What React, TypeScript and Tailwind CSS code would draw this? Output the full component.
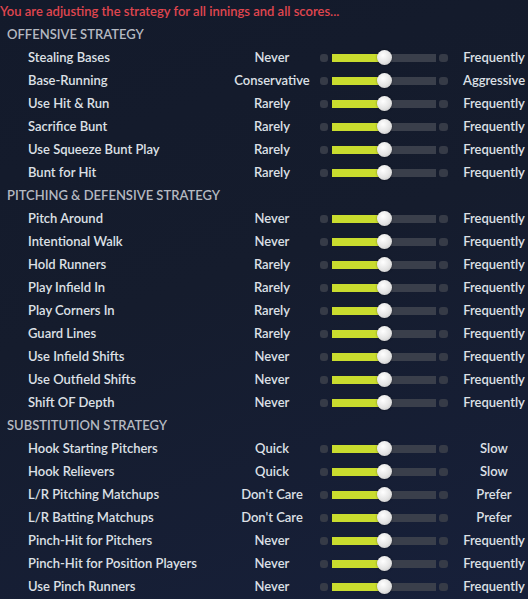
import React from "react"

type Row = { label: string; low: string; high: string }
type Section = { title: string; rows: Row[] }

const sections: Section[] = [
  {
    title: "OFFENSIVE STRATEGY",
    rows: [
      { label: "Stealing Bases", low: "Never", high: "Frequently" },
      { label: "Base-Running", low: "Conservative", high: "Aggressive" },
      { label: "Use Hit & Run", low: "Rarely", high: "Frequently" },
      { label: "Sacrifice Bunt", low: "Rarely", high: "Frequently" },
      { label: "Use Squeeze Bunt Play", low: "Rarely", high: "Frequently" },
      { label: "Bunt for Hit", low: "Rarely", high: "Frequently" },
    ],
  },
  {
    title: "PITCHING & DEFENSIVE STRATEGY",
    rows: [
      { label: "Pitch Around", low: "Never", high: "Frequently" },
      { label: "Intentional Walk", low: "Never", high: "Frequently" },
      { label: "Hold Runners", low: "Rarely", high: "Frequently" },
      { label: "Play Infield In", low: "Rarely", high: "Frequently" },
      { label: "Play Corners In", low: "Rarely", high: "Frequently" },
      { label: "Guard Lines", low: "Rarely", high: "Frequently" },
      { label: "Use Infield Shifts", low: "Never", high: "Frequently" },
      { label: "Use Outfield Shifts", low: "Never", high: "Frequently" },
      { label: "Shift OF Depth", low: "Never", high: "Frequently" },
    ],
  },
  {
    title: "SUBSTITUTION STRATEGY",
    rows: [
      { label: "Hook Starting Pitchers", low: "Quick", high: "Slow" },
      { label: "Hook Relievers", low: "Quick", high: "Slow" },
      { label: "L/R Pitching Matchups", low: "Don't Care", high: "Prefer" },
      { label: "L/R Batting Matchups", low: "Don't Care", high: "Prefer" },
      { label: "Pinch-Hit for Pitchers", low: "Never", high: "Frequently" },
      { label: "Pinch-Hit for Position Players", low: "Never", high: "Frequently" },
      { label: "Use Pinch Runners", low: "Never", high: "Frequently" },
    ],
  },
]

function Slider() {
  return (
    <div className="relative flex h-[23px] w-[128px] items-center">
      <div className="h-[8px] w-[8px] rounded-[3px] bg-[#363b47]" />
      <div className="ml-[4px] flex h-[8px] w-[104px]">
        <div className="h-full w-[50px] bg-[#c9dc2e]" />
        <div className="h-full flex-1 bg-[#3a3f4b]" />
      </div>
      <div className="ml-[3px] h-[8px] w-[9px] rounded-[3px] bg-[#363b47]" />
      <div className="absolute left-[57px] top-[4px] h-[15px] w-[15px] rounded-full bg-[radial-gradient(circle_at_40%_35%,#ffffff,#e4e4e4_55%,#bdbdbd)] shadow-[0_0_2px_rgba(0,0,0,0.5)]" />
    </div>
  )
}

export default function App() {
  return (
    <div
      className="h-[599px] w-[528px] overflow-hidden bg-[#141a2a] bg-[linear-gradient(160deg,#131a2b_0%,#151c2d_45%,#17203a_100%)] text-[13px] font-semibold"
      style={{ fontFamily: "Lato, 'Noto Sans', sans-serif" }}
    >
      <div className="flex h-[23px] items-center text-[#e0464f]">
        You are adjusting the strategy for all innings and all scores...
      </div>
      {sections.map((s) => (
        <div key={s.title}>
          <div className="flex h-[23px] items-center pl-[7px] text-[#b5b9c1]">{s.title}</div>
          {s.rows.map((r) => (
            <div key={r.label} className="flex h-[23px] items-center text-[#dde0e6]">
              <div className="w-[234px] pl-[28px]">{r.label}</div>
              <div className="w-[76px] text-center">{r.low}</div>
              <div className="ml-[10px]">
                <Slider />
              </div>
              <div className="ml-[12px] w-[68px] text-center">{r.high}</div>
            </div>
          ))}
        </div>
      ))}
    </div>
  )
}
